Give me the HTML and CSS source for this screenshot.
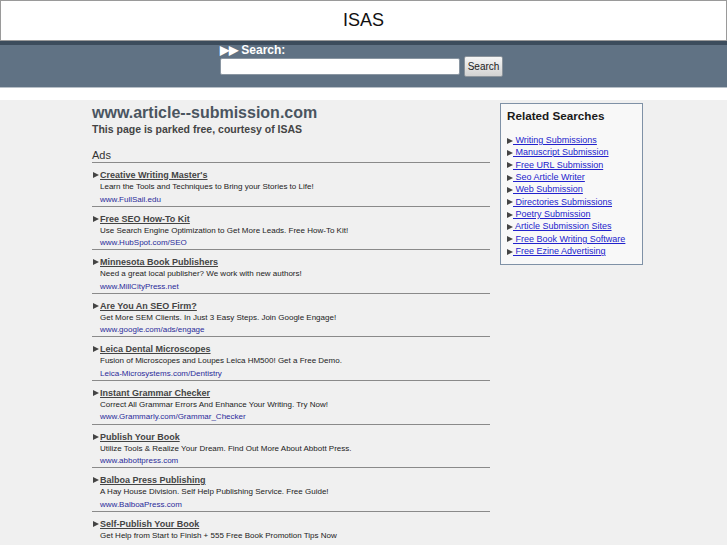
FILE: index.html
```html
<!DOCTYPE html>
<html lang="en">
<head>
    <meta charset="UTF-8">
    <title>www.article--submission.com</title>
    <link rel="stylesheet" href="styles.css">
</head>
<body>
    <div class="top">ISAS</div>

    <div class="search-bar">
        <form class="search-form">
            <div class="search-label">&#9654;&#9654; Search:</div>
            <div class="search-row">
                <input type="text" class="search-input">
                <button type="button" class="search-button">Search</button>
            </div>
        </form>
    </div>

    <div class="page">
        <div class="main">
            <h1 class="domain">www.article--submission.com</h1>
            <div class="courtesy">This page is parked free, courtesy of ISAS</div>
            <div class="ads-head">Ads</div>

            <div class="ad">
                <a class="ad-title" href="#">Creative Writing Master's</a>
                <div class="ad-desc">Learn the Tools and Techniques to Bring your Stories to Life!</div>
                <a class="ad-url" href="#">www.FullSail.edu</a>
            </div>
            <div class="ad">
                <a class="ad-title" href="#">Free SEO How-To Kit</a>
                <div class="ad-desc">Use Search Engine Optimization to Get More Leads. Free How-To Kit!</div>
                <a class="ad-url" href="#">www.HubSpot.com/SEO</a>
            </div>
            <div class="ad">
                <a class="ad-title" href="#">Minnesota Book Publishers</a>
                <div class="ad-desc">Need a great local publisher? We work with new authors!</div>
                <a class="ad-url" href="#">www.MillCityPress.net</a>
            </div>
            <div class="ad">
                <a class="ad-title" href="#">Are You An SEO Firm?</a>
                <div class="ad-desc">Get More SEM Clients. In Just 3 Easy Steps. Join Google Engage!</div>
                <a class="ad-url" href="#">www.google.com/ads/engage</a>
            </div>
            <div class="ad">
                <a class="ad-title" href="#">Leica Dental Microscopes</a>
                <div class="ad-desc">Fusion of Microscopes and Loupes Leica HM500! Get a Free Demo.</div>
                <a class="ad-url" href="#">Leica-Microsystems.com/Dentistry</a>
            </div>
            <div class="ad">
                <a class="ad-title" href="#">Instant Grammar Checker</a>
                <div class="ad-desc">Correct All Grammar Errors And Enhance Your Writing. Try Now!</div>
                <a class="ad-url" href="#">www.Grammarly.com/Grammar_Checker</a>
            </div>
            <div class="ad">
                <a class="ad-title" href="#">Publish Your Book</a>
                <div class="ad-desc">Utilize Tools &amp; Realize Your Dream. Find Out More About Abbott Press.</div>
                <a class="ad-url" href="#">www.abbottpress.com</a>
            </div>
            <div class="ad">
                <a class="ad-title" href="#">Balboa Press Publishing</a>
                <div class="ad-desc">A Hay House Division. Self Help Publishing Service. Free Guide!</div>
                <a class="ad-url" href="#">www.BalboaPress.com</a>
            </div>
            <div class="ad">
                <a class="ad-title" href="#">Self-Publish Your Book</a>
                <div class="ad-desc">Get Help from Start to Finish + 555 Free Book Promotion Tips Now</div>
            </div>
        </div>

        <div class="related">
            <h2 class="related-head">Related Searches</h2>
            <ul class="related-list">
                <li><a href="#"> Writing Submissions</a></li>
                <li><a href="#"> Manuscript Submission</a></li>
                <li><a href="#"> Free URL Submission</a></li>
                <li><a href="#"> Seo Article Writer</a></li>
                <li><a href="#"> Web Submission</a></li>
                <li><a href="#"> Directories Submissions</a></li>
                <li><a href="#"> Poetry Submission</a></li>
                <li><a href="#"> Article Submission Sites</a></li>
                <li><a href="#"> Free Book Writing Software</a></li>
                <li><a href="#"> Free Ezine Advertising</a></li>
            </ul>
        </div>
    </div>
</body>
</html>
```

FILE: styles.css
```css
body {
    margin: 0;
    background: #fff;
    font-family: "Liberation Sans", Arial, sans-serif;
    color: #222;
}

.top {
    height: 39px;
    line-height: 39px;
    border: 1px solid #9a9a9a;
    text-align: center;
    font-size: 18px;
    color: #111;
}

.search-bar {
    border-top: 4px solid #3c4c5c;
    border-bottom: 1px solid #b8c0c8;
    background-color: #607284;
    height: 42px;
}

.search-form {
    margin-left: 220px;
}

.search-label {
    color: #fff;
    font-weight: bold;
    font-size: 12px;
    line-height: 11px;
}

.search-row {
    display: flex;
    align-items: center;
    gap: 4px;
}

.search-input {
    width: 236px;
    height: 13px;
    margin: 0;
    border: 1px solid #8a96a2;
    border-radius: 2px;
    background: #fff;
    padding: 1px;
}

.search-button {
    height: 21px;
    width: 39px;
    padding: 0;
    border: 1px solid #8c949c;
    border-radius: 2px;
    background: linear-gradient(#f6f6f6, #d2d2d2);
    font-family: "Liberation Sans", Arial, sans-serif;
    font-size: 10px;
    color: #222;
}

.page {
    margin-top: 12px;
    background-color: #f0f0f0;
    display: flex;
    gap: 10px;
    padding-left: 92px;
    min-height: 460px;
}

.main {
    width: 398px;
}

.domain {
    margin: 4px 0 0;
    font-size: 16px;
    line-height: 18px;
    color: #4a5560;
}

.courtesy {
    margin-top: 1px;
    font-size: 10.5px;
    font-weight: bold;
    color: #444;
}

.ads-head {
    margin-top: 14px;
    font-size: 11px;
    line-height: 13px;
    border-bottom: 1px solid #8a8a8a;
    color: #333;
}

.ad {
    padding: 6px 0 1px 8px;
    border-bottom: 1px solid #8a8a8a;
    font-size: 8px;
    position: relative;
}

.ad:last-child {
    border-bottom: none;
}

.ad::before {
    content: "";
    position: absolute;
    left: 1px;
    top: 9px;
    border-left: 6px solid #444;
    border-top: 3.5px solid transparent;
    border-bottom: 3.5px solid transparent;
}

.ad-title {
    display: block;
    line-height: 12px;
    font-size: 9px;
    font-weight: bold;
    color: #444;
}

.ad-desc {
    line-height: 11px;
    color: #222;
}

.ad-url {
    display: block;
    padding-top: 1.5px;
    line-height: 11.1px;
    color: #2b2b9a;
    text-decoration: none;
}

.related {
    margin-top: 3px;
    align-self: flex-start;
    width: 141px;
    border: 1px solid #7f91a6;
    background: #f8f8f8;
    padding-bottom: 7px;
}

.related-head {
    margin: 5px 0 0 6px;
    font-size: 11.7px;
    line-height: 14px;
    color: #1a1a1a;
}

.related-list {
    list-style: none;
    margin: 11px 0 0 6px;
    padding: 0;
}

.related-list li {
    font-size: 9px;
    line-height: 12.35px;
    white-space: pre;
}

.related-list li::before {
    content: "";
    display: inline-block;
    border-left: 6px solid #444;
    border-top: 3.5px solid transparent;
    border-bottom: 3.5px solid transparent;
    vertical-align: -0.5px;
}

.related-list a {
    color: #2222cc;
}
```
